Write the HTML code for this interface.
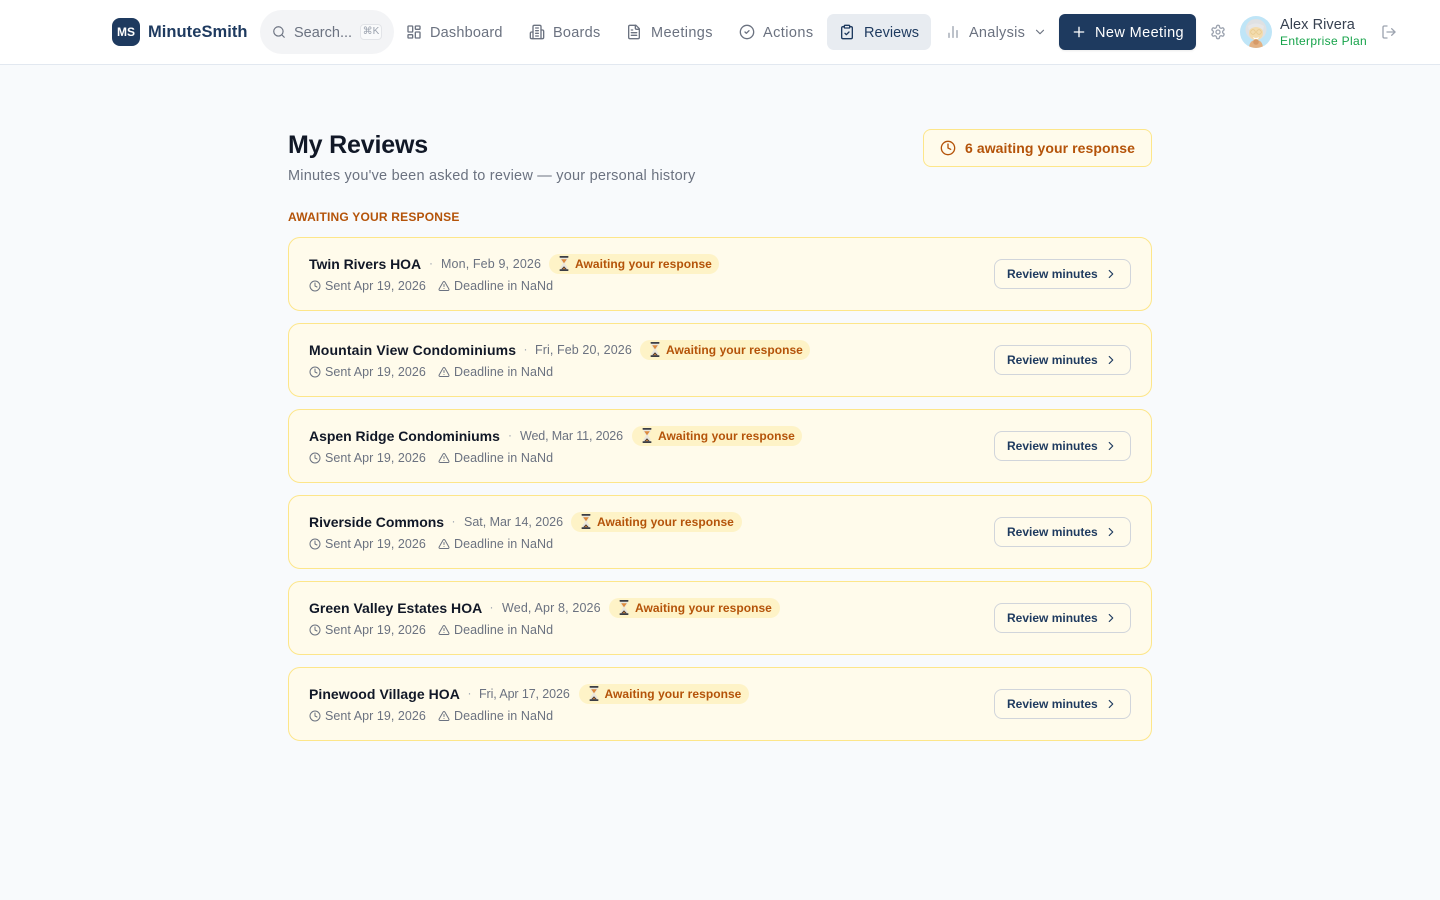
<!DOCTYPE html>
<html lang="en"><head><meta charset="utf-8"><title>My Reviews - MinuteSmith</title>
<style>
*{box-sizing:border-box}
html,body{margin:0;padding:0}
body{width:1440px;height:900px;overflow:hidden;background:#f8fafc;font-family:"Liberation Sans",sans-serif;position:relative;color:#111827}
.a,.t{position:absolute;white-space:nowrap}
.t{line-height:20px;height:20px}
svg.i{position:absolute;fill:none;stroke:currentColor;stroke-linecap:round;stroke-linejoin:round}
header{position:absolute;left:0;top:0;width:1440px;height:65px;background:#fff;border-bottom:1px solid #e2e8f0}
.nav{font-size:14.5px;color:#6b7280;top:23px}
.nic{color:#6b7280;stroke-width:2}
.card{position:absolute;left:288px;width:864px;height:74px;background:#fffbeb;border:1px solid #fde68a;border-radius:12px}
.name{left:20px;top:16px;font-size:14px;font-weight:700;color:#111827}
.dot{top:15px;font-size:12px;color:#9ca3af}
.date{top:16px;font-size:12.5px;color:#6b7280}
.pill{position:absolute;top:16px;width:170px;height:20px;border-radius:10px;background:#fef3c7}
.em{position:absolute;left:10px;top:2px}
.pt{left:26px;top:0;font-size:12px;font-weight:700;color:#b45309;letter-spacing:.05px}
.sent{left:36px;top:38px;font-size:12.5px;color:#6b7280;letter-spacing:.05px}
.dl{left:165px;top:38px;font-size:12.5px;color:#6b7280;letter-spacing:.07px}
.btn{position:absolute;left:705px;top:21px;width:137px;height:30px;border:1px solid #d1d5db;border-radius:8px;background:#fffbeb}
.btn span{position:absolute;left:12px;top:4px;line-height:20px;font-size:12px;font-weight:700;color:#1e3a5f;white-space:nowrap}
</style></head><body>
<svg width="0" height="0" style="position:absolute"><defs><symbol id="hg" viewBox="0 0 10 15"><path d="M1.5 1.5h7v2.2L5.9 7.5 8.5 11.3v2.2h-7v-2.2L4.1 7.5 1.5 3.7z" fill="#e9e6dc"/><path d="M2.2 3.2h5.6L5 7.2z" fill="#dd8a3c"/><path d="M2.2 13.2 5 10.2l2.8 3z" fill="#4a3a30"/><path d="M3.6 13.2 5 11.6l1.4 1.6z" fill="#dd8a3c"/><rect x=".6" y="0" width="8.8" height="1.7" rx=".4" fill="#3b3d44"/><rect x=".6" y="13.3" width="8.8" height="1.7" rx=".4" fill="#3b3d44"/></symbol></defs></svg>
<header>
<div class="a" style="left:112px;top:18px;width:28px;height:28px;border-radius:8px;background:#1e3a5f;color:#fff;font-size:12px;font-weight:700;line-height:28px;text-align:center">MS</div>
<div class="t" style="left:148px;top:22px;font-size:16.5px;font-weight:700;color:#1e3a5f;letter-spacing:.05px">MinuteSmith</div>

<div class="a" style="left:260px;top:10px;width:134px;height:44px;border-radius:22px;background:#f3f4f6"></div>
<svg class="i" style="left:272px;top:25px;color:#6b7280;stroke-width:2" width="14" height="14" viewBox="0 0 24 24"><circle cx="11" cy="11" r="8"/><path d="m21 21-4.3-4.3"/></svg>
<div class="t nav" style="left:294px">Search...</div>
<div class="a" style="left:360px;top:24px;width:22px;height:16px;border:1px solid #e2e4e8;border-radius:4px;background:#f9fafb;color:#9ca3af;font-size:10px;line-height:14px;text-align:center;font-family:'Liberation Sans','DejaVu Sans',sans-serif">⌘K</div>

<svg class="i nic" style="left:406px;top:24px" width="16" height="16" viewBox="0 0 24 24"><rect x="3" y="3" width="7" height="9" rx="1"/><rect x="14" y="3" width="7" height="5" rx="1"/><rect x="14" y="12" width="7" height="9" rx="1"/><rect x="3" y="16" width="7" height="5" rx="1"/></svg>
<div class="t nav" style="left:430px;letter-spacing:.19px">Dashboard</div>

<svg class="i nic" style="left:529px;top:24px" width="16" height="16" viewBox="0 0 24 24"><path d="M6 22V4a2 2 0 0 1 2-2h8a2 2 0 0 1 2 2v18Z"/><path d="M6 12H4a2 2 0 0 0-2 2v6a2 2 0 0 0 2 2h2"/><path d="M18 9h2a2 2 0 0 1 2 2v9a2 2 0 0 1-2 2h-2"/><path d="M10 6h4"/><path d="M10 10h4"/><path d="M10 14h4"/><path d="M10 18h4"/></svg>
<div class="t nav" style="left:553px;letter-spacing:.25px">Boards</div>

<svg class="i nic" style="left:626px;top:24px" width="16" height="16" viewBox="0 0 24 24"><path d="M15 2H6a2 2 0 0 0-2 2v16a2 2 0 0 0 2 2h12a2 2 0 0 0 2-2V7Z"/><path d="M14 2v4a2 2 0 0 0 2 2h4"/><path d="M10 9H8"/><path d="M16 13H8"/><path d="M16 17H8"/></svg>
<div class="t nav" style="left:651px;letter-spacing:.38px">Meetings</div>

<svg class="i nic" style="left:739px;top:24px" width="16" height="16" viewBox="0 0 24 24"><circle cx="12" cy="12" r="10"/><path d="m9 12 2 2 4-4"/></svg>
<div class="t nav" style="left:763px;letter-spacing:.42px">Actions</div>

<div class="a" style="left:827px;top:14px;width:104px;height:36px;border-radius:7px;background:#e8ecf1"></div>
<svg class="i" style="left:839px;top:24px;color:#1e3a5f;stroke-width:2" width="16" height="16" viewBox="0 0 24 24"><rect x="8" y="2" width="8" height="4" rx="1"/><path d="M16 4h2a2 2 0 0 1 2 2v14a2 2 0 0 1-2 2H6a2 2 0 0 1-2-2V6a2 2 0 0 1 2-2h2"/><path d="m9 14 2 2 4-4"/></svg>
<div class="t nav" style="left:864px;color:#1e3a5f;letter-spacing:.03px">Reviews</div>

<svg class="i" style="left:945px;top:24px;color:#9ca3af;stroke-width:2" width="16" height="16" viewBox="0 0 24 24"><path d="M18 20V10"/><path d="M12 20V4"/><path d="M6 20v-6"/></svg>
<div class="t nav" style="left:969px;letter-spacing:.26px">Analysis</div>
<svg class="i" style="left:1033px;top:25px;color:#6b7280;stroke-width:2" width="14" height="14" viewBox="0 0 24 24"><path d="m6 9 6 6 6-6"/></svg>

<div class="a" style="left:1059px;top:14px;width:137px;height:36px;border-radius:6px;background:#1e3a5f;box-shadow:0 1px 2px rgba(0,0,0,.08)"></div>
<svg class="i" style="left:1071px;top:24px;color:#fff;stroke-width:2" width="16" height="16" viewBox="0 0 24 24"><path d="M5 12h14"/><path d="M12 5v14"/></svg>
<div class="t" style="left:1095px;top:23px;font-size:14.5px;color:#fff;letter-spacing:.4px">New Meeting</div>

<svg class="i" style="left:1210px;top:24px;color:#9ca3af;stroke-width:2" width="16" height="16" viewBox="0 0 24 24"><path d="M12.22 2h-.44a2 2 0 0 0-2 2v.18a2 2 0 0 1-1 1.73l-.43.25a2 2 0 0 1-2 0l-.15-.08a2 2 0 0 0-2.73.73l-.22.38a2 2 0 0 0 .73 2.73l.15.1a2 2 0 0 1 1 1.72v.51a2 2 0 0 1-1 1.74l-.15.09a2 2 0 0 0-.73 2.73l.22.38a2 2 0 0 0 2.73.73l.15-.08a2 2 0 0 1 2 0l.43.25a2 2 0 0 1 1 1.73V20a2 2 0 0 0 2 2h.44a2 2 0 0 0 2-2v-.18a2 2 0 0 1 1-1.73l.43-.25a2 2 0 0 1 2 0l.15.08a2 2 0 0 0 2.73-.73l.22-.39a2 2 0 0 0-.73-2.73l-.15-.08a2 2 0 0 1-1-1.74v-.5a2 2 0 0 1 1-1.74l.15-.09a2 2 0 0 0 .73-2.73l-.22-.38a2 2 0 0 0-2.73-.73l-.15.08a2 2 0 0 1-2 0l-.43-.25a2 2 0 0 1-1-1.73V4a2 2 0 0 0-2-2z"/><circle cx="12" cy="12" r="3"/></svg>

<svg class="a" style="left:1240px;top:16px" width="32" height="32" viewBox="0 0 32 32"><defs><clipPath id="c"><circle cx="16" cy="16" r="16"/></clipPath></defs><g clip-path="url(#c)"><rect width="32" height="32" fill="#bfe5f7"/><circle cx="16" cy="13.5" r="10.5" fill="#dfe1e3"/><ellipse cx="16" cy="17" rx="7" ry="7" fill="#f3dcae"/><path d="M9 14q7-6 14 0l1-4q-8-5-16 0z" fill="#e6e7e8"/><circle cx="13" cy="16" r="2.3" fill="none" stroke="#e7c98b" stroke-width=".8"/><circle cx="19" cy="16" r="2.3" fill="none" stroke="#e7c98b" stroke-width=".8"/><path d="M13 21q3 2 6 0l-1 2h-4z" fill="#fff"/><path d="M9 33q0-9 7-9t7 9z" fill="#e3b183"/><circle cx="16" cy="26" r="2.8" fill="#d69a68"/></g></svg>
<div class="t" style="left:1280px;top:15px;font-size:14.5px;color:#374151;letter-spacing:.07px">Alex Rivera</div>
<div class="t" style="left:1280px;top:31px;font-size:12px;color:#16a34a;letter-spacing:.33px">Enterprise Plan</div>
<svg class="i" style="left:1381px;top:24px;color:#9ca3af;stroke-width:2" width="16" height="16" viewBox="0 0 24 24"><path d="M9 21H5a2 2 0 0 1-2-2V5a2 2 0 0 1 2-2h4"/><path d="m16 17 5-5-5-5"/><path d="M21 12H9"/></svg>
</header>

<main>
<h1 class="a" style="margin:0;left:288px;top:130px;font-size:25px;line-height:30px;font-weight:700;color:#111827;letter-spacing:-.17px">My Reviews</h1>
<p class="t" style="margin:0;left:288px;top:166px;font-size:14.5px;color:#6b7280;letter-spacing:.22px">Minutes you've been asked to review — your personal history</p>

<div class="a" style="left:923px;top:129px;width:229px;height:38px;border-radius:8px;background:#fffbeb;border:1px solid #fde68a"></div>
<svg class="i" style="left:940px;top:140px;color:#b45309;stroke-width:2" width="16" height="16" viewBox="0 0 24 24"><circle cx="12" cy="12" r="10"/><path d="M12 6v6l4 2"/></svg>
<div class="t" style="left:965px;top:138px;font-size:14px;font-weight:700;color:#b45309;letter-spacing:.08px">6 awaiting your response</div>

<h2 class="t" style="margin:0;left:288px;top:206.5px;font-size:12px;font-weight:700;color:#b45309;letter-spacing:.2px">AWAITING YOUR RESPONSE</h2>

<section class="card" style="top:237px">
<div class="t name" style="letter-spacing:-.03px">Twin Rivers HOA</div><div class="t dot" style="left:140px">·</div><div class="t date" style="left:152px;letter-spacing:.13px">Mon, Feb 9, 2026</div>
<div class="pill" style="left:260px"><svg class="em" width="10" height="15" aria-label="hourglass"><use href="#hg"/></svg><span class="t pt">Awaiting your response</span></div>
<svg class="i" style="left:20px;top:42px;color:#6b7280;stroke-width:2" width="12" height="12" viewBox="0 0 24 24"><circle cx="12" cy="12" r="10"/><path d="M12 6v6l4 2"/></svg><div class="t sent">Sent Apr 19, 2026</div>
<svg class="i" style="left:149px;top:42px;color:#6b7280;stroke-width:2" width="12" height="12" viewBox="0 0 24 24"><path d="m21.73 18-8-14a2 2 0 0 0-3.48 0l-8 14A2 2 0 0 0 4 21h16a2 2 0 0 0 1.73-3"/><path d="M12 9v4"/><path d="M12 17h.01"/></svg><div class="t dl">Deadline in NaNd</div>
<div class="btn"><span>Review minutes</span><svg class="i" style="left:109px;top:7px;color:#1e3a5f;stroke-width:2" width="14" height="14" viewBox="0 0 24 24"><path d="m9 18 6-6-6-6"/></svg></div>
</section>

<section class="card" style="top:323px">
<div class="t name" style="letter-spacing:.14px">Mountain View Condominiums</div><div class="t dot" style="left:234.5px">·</div><div class="t date" style="left:246px;letter-spacing:.1px">Fri, Feb 20, 2026</div>
<div class="pill" style="left:351px"><svg class="em" width="10" height="15" aria-label="hourglass"><use href="#hg"/></svg><span class="t pt">Awaiting your response</span></div>
<svg class="i" style="left:20px;top:42px;color:#6b7280;stroke-width:2" width="12" height="12" viewBox="0 0 24 24"><circle cx="12" cy="12" r="10"/><path d="M12 6v6l4 2"/></svg><div class="t sent">Sent Apr 19, 2026</div>
<svg class="i" style="left:149px;top:42px;color:#6b7280;stroke-width:2" width="12" height="12" viewBox="0 0 24 24"><path d="m21.73 18-8-14a2 2 0 0 0-3.48 0l-8 14A2 2 0 0 0 4 21h16a2 2 0 0 0 1.73-3"/><path d="M12 9v4"/><path d="M12 17h.01"/></svg><div class="t dl">Deadline in NaNd</div>
<div class="btn"><span>Review minutes</span><svg class="i" style="left:109px;top:7px;color:#1e3a5f;stroke-width:2" width="14" height="14" viewBox="0 0 24 24"><path d="m9 18 6-6-6-6"/></svg></div>
</section>

<section class="card" style="top:409px">
<div class="t name" style="letter-spacing:-.02px">Aspen Ridge Condominiums</div><div class="t dot" style="left:219px">·</div><div class="t date" style="left:231px;letter-spacing:-.13px">Wed, Mar 11, 2026</div>
<div class="pill" style="left:343px"><svg class="em" width="10" height="15" aria-label="hourglass"><use href="#hg"/></svg><span class="t pt">Awaiting your response</span></div>
<svg class="i" style="left:20px;top:42px;color:#6b7280;stroke-width:2" width="12" height="12" viewBox="0 0 24 24"><circle cx="12" cy="12" r="10"/><path d="M12 6v6l4 2"/></svg><div class="t sent">Sent Apr 19, 2026</div>
<svg class="i" style="left:149px;top:42px;color:#6b7280;stroke-width:2" width="12" height="12" viewBox="0 0 24 24"><path d="m21.73 18-8-14a2 2 0 0 0-3.48 0l-8 14A2 2 0 0 0 4 21h16a2 2 0 0 0 1.73-3"/><path d="M12 9v4"/><path d="M12 17h.01"/></svg><div class="t dl">Deadline in NaNd</div>
<div class="btn"><span>Review minutes</span><svg class="i" style="left:109px;top:7px;color:#1e3a5f;stroke-width:2" width="14" height="14" viewBox="0 0 24 24"><path d="m9 18 6-6-6-6"/></svg></div>
</section>

<section class="card" style="top:495px">
<div class="t name" style="letter-spacing:-.02px">Riverside Commons</div><div class="t dot" style="left:162.5px">·</div><div class="t date" style="left:175px;letter-spacing:-.02px">Sat, Mar 14, 2026</div>
<div class="pill" style="left:282px;width:171px"><svg class="em" width="10" height="15" aria-label="hourglass"><use href="#hg"/></svg><span class="t pt">Awaiting your response</span></div>
<svg class="i" style="left:20px;top:42px;color:#6b7280;stroke-width:2" width="12" height="12" viewBox="0 0 24 24"><circle cx="12" cy="12" r="10"/><path d="M12 6v6l4 2"/></svg><div class="t sent">Sent Apr 19, 2026</div>
<svg class="i" style="left:149px;top:42px;color:#6b7280;stroke-width:2" width="12" height="12" viewBox="0 0 24 24"><path d="m21.73 18-8-14a2 2 0 0 0-3.48 0l-8 14A2 2 0 0 0 4 21h16a2 2 0 0 0 1.73-3"/><path d="M12 9v4"/><path d="M12 17h.01"/></svg><div class="t dl">Deadline in NaNd</div>
<div class="btn"><span>Review minutes</span><svg class="i" style="left:109px;top:7px;color:#1e3a5f;stroke-width:2" width="14" height="14" viewBox="0 0 24 24"><path d="m9 18 6-6-6-6"/></svg></div>
</section>

<section class="card" style="top:581px">
<div class="t name" style="letter-spacing:.02px">Green Valley Estates HOA</div><div class="t dot" style="left:200.5px">·</div><div class="t date" style="left:213px;letter-spacing:.15px">Wed, Apr 8, 2026</div>
<div class="pill" style="left:320px;width:171px"><svg class="em" width="10" height="15" aria-label="hourglass"><use href="#hg"/></svg><span class="t pt">Awaiting your response</span></div>
<svg class="i" style="left:20px;top:42px;color:#6b7280;stroke-width:2" width="12" height="12" viewBox="0 0 24 24"><circle cx="12" cy="12" r="10"/><path d="M12 6v6l4 2"/></svg><div class="t sent">Sent Apr 19, 2026</div>
<svg class="i" style="left:149px;top:42px;color:#6b7280;stroke-width:2" width="12" height="12" viewBox="0 0 24 24"><path d="m21.73 18-8-14a2 2 0 0 0-3.48 0l-8 14A2 2 0 0 0 4 21h16a2 2 0 0 0 1.73-3"/><path d="M12 9v4"/><path d="M12 17h.01"/></svg><div class="t dl">Deadline in NaNd</div>
<div class="btn"><span>Review minutes</span><svg class="i" style="left:109px;top:7px;color:#1e3a5f;stroke-width:2" width="14" height="14" viewBox="0 0 24 24"><path d="m9 18 6-6-6-6"/></svg></div>
</section>

<section class="card" style="top:667px">
<div class="t name" style="letter-spacing:.05px">Pinewood Village HOA</div><div class="t dot" style="left:178.5px">·</div><div class="t date" style="left:190px;letter-spacing:-.1px">Fri, Apr 17, 2026</div>
<div class="pill" style="left:290px"><svg class="em" width="10" height="15" aria-label="hourglass"><use href="#hg"/></svg><span class="t pt" style="left:25.5px">Awaiting your response</span></div>
<svg class="i" style="left:20px;top:42px;color:#6b7280;stroke-width:2" width="12" height="12" viewBox="0 0 24 24"><circle cx="12" cy="12" r="10"/><path d="M12 6v6l4 2"/></svg><div class="t sent">Sent Apr 19, 2026</div>
<svg class="i" style="left:149px;top:42px;color:#6b7280;stroke-width:2" width="12" height="12" viewBox="0 0 24 24"><path d="m21.73 18-8-14a2 2 0 0 0-3.48 0l-8 14A2 2 0 0 0 4 21h16a2 2 0 0 0 1.73-3"/><path d="M12 9v4"/><path d="M12 17h.01"/></svg><div class="t dl">Deadline in NaNd</div>
<div class="btn"><span>Review minutes</span><svg class="i" style="left:109px;top:7px;color:#1e3a5f;stroke-width:2" width="14" height="14" viewBox="0 0 24 24"><path d="m9 18 6-6-6-6"/></svg></div>
</section>
</main>
</body></html>
